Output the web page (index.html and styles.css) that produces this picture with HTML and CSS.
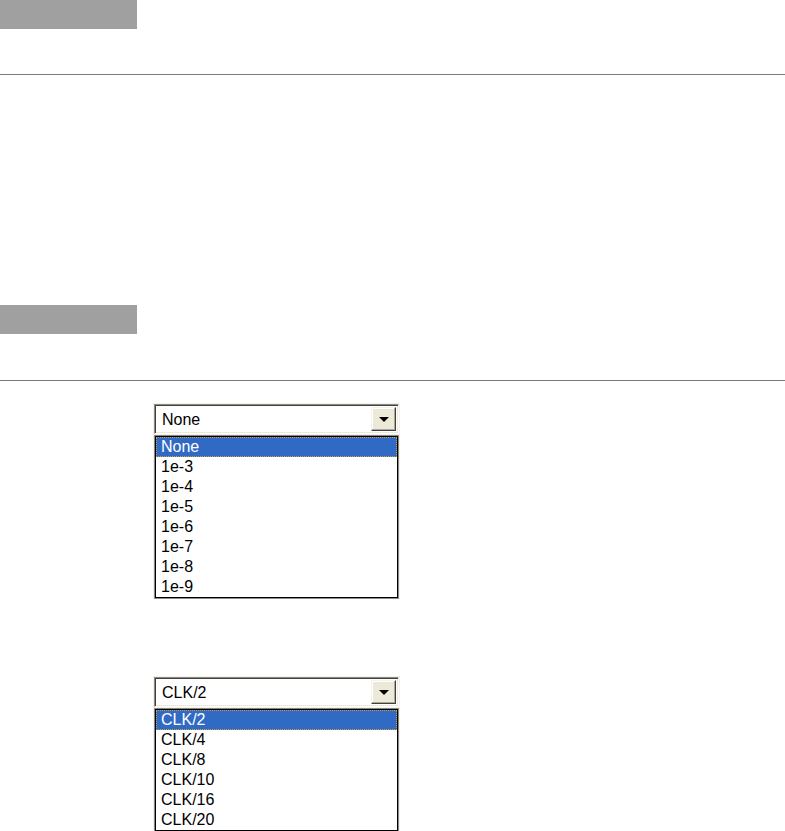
FILE: index.html
```html
<!DOCTYPE html>
<html>
<head>
<meta charset="utf-8">
<link rel="stylesheet" href="styles.css">
</head>
<body>
<div class="page">
  <div class="bar bar-first"></div>
  <div class="rule rule-first"></div>
  <div class="bar bar-second"></div>
  <div class="rule rule-second"></div>

  <div class="shot shot-first">
    <div class="combo">
      <div class="combo-value">None</div>
      <div class="combo-btn"><span class="arrow"></span></div>
    </div>
    <ul class="list">
      <li class="item selected">None</li>
      <li class="item">1e-3</li>
      <li class="item">1e-4</li>
      <li class="item">1e-5</li>
      <li class="item">1e-6</li>
      <li class="item">1e-7</li>
      <li class="item">1e-8</li>
      <li class="item">1e-9</li>
    </ul>
  </div>

  <div class="shot shot-second">
    <div class="combo">
      <div class="combo-value">CLK/2</div>
      <div class="combo-btn"><span class="arrow"></span></div>
    </div>
    <ul class="list">
      <li class="item selected">CLK/2</li>
      <li class="item">CLK/4</li>
      <li class="item">CLK/8</li>
      <li class="item">CLK/10</li>
      <li class="item">CLK/16</li>
      <li class="item">CLK/20</li>
    </ul>
  </div>
</div>
</body>
</html>
```

FILE: styles.css
```css
html, body {
  margin: 0;
  padding: 0;
  background: #ffffff;
}

body {
  font-family: "Liberation Sans", Arial, sans-serif;
  width: 785px;
  height: 831px;
  overflow: hidden;
}

.page {
  display: flex;
  flex-direction: column;
  align-items: flex-start;
}

.bar {
  width: 137px;
  height: 29px;
  background: #a0a0a0;
}

.bar-second {
  margin-top: 230px;
}

.rule {
  width: 785px;
  height: 1px;
  background: #7a7a7a;
}

.rule-first {
  margin-top: 45px;
}

.rule-second {
  margin-top: 46px;
}

.shot {
  margin-left: 153px;
  width: 245px;
  padding: 1px;
  background: #f4f2e8;
  display: flex;
  flex-direction: column;
  gap: 2px;
}

.shot-first {
  margin-top: 22px;
}

.shot-second {
  margin-top: 77px;
}

.combo {
  height: 28px;
  border: 1px solid #8e8c80;
  border-right-color: #ffffff;
  border-bottom-color: #ffffff;
  box-shadow: inset 1px 1px 0 #404040, inset -1px -1px 0 #ece9d8;
  background: #ffffff;
  display: flex;
  align-items: center;
  justify-content: space-between;
  padding: 0 2px 0 7px;
}

.combo-value {
  font-size: 16px;
  color: #000000;
  line-height: 20px;
  padding-top: 1px;
  transform: scaleY(1.08);
}

.combo-btn {
  width: 23px;
  height: 22px;
  background: #ece9d8;
  border: 1px solid #f4f2ea;
  border-right-color: #404040;
  border-bottom-color: #404040;
  box-shadow: inset -1px -1px 0 #aca899, inset 1px 1px 0 #ffffff;
  display: flex;
  align-items: center;
  justify-content: center;
}

.arrow {
  width: 0;
  height: 0;
  margin-top: 1px;
  border-left: 5px solid transparent;
  border-right: 5px solid transparent;
  border-top: 5px solid #000000;
}

.list {
  list-style: none;
  padding: 0;
  border: 1px solid #000000;
  box-shadow: 0 0 0 1px #8a8a8a;
  background: #ffffff;
  margin: 0 1px;
}

.item {
  height: 20px;
  line-height: 20px;
  font-size: 16px;
  color: #000000;
  padding-left: 5px;
  box-sizing: border-box;
}

.item.selected {
  background: #316ac5;
  color: #ffffff;
  outline: 1px dotted #c8a040;
  outline-offset: -1px;
}
```
